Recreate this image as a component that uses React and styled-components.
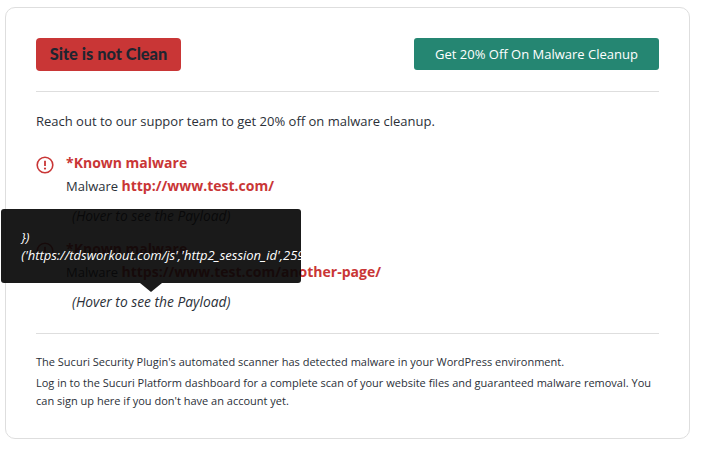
import React from "react";
import styled, { createGlobalStyle } from "styled-components";

const malwareItems = [
  { url: "http://www.test.com/", showTooltip: false },
  { url: "https://www.test.com/another-page/", showTooltip: true },
];

function AlertIcon() {
  return (
    <svg width="18" height="18" viewBox="0 0 18 18" fill="none">
      <circle cx="9" cy="9" r="7.8" stroke="#c93636" strokeWidth="1.6" />
      <path d="M9 4.8v5.2" stroke="#c93636" strokeWidth="1.8" />
      <circle cx="9" cy="12.6" r="1.1" fill="#c93636" />
    </svg>
  );
}

export default function App() {
  return (
    <>
      <GlobalStyle />
      <Card>
        <Header>
          <StatusBadge>Site is not Clean</StatusBadge>
          <CleanupButton>Get 20% Off On Malware Cleanup</CleanupButton>
        </Header>
        <Intro>Reach out to our suppor team to get 20% off on malware cleanup.</Intro>
        <MalwareList>
          {malwareItems.map((item) => (
            <MalwareItem key={item.url}>
              <IconSlot>
                <AlertIcon />
              </IconSlot>
              <div>
                <Title>*Known malware</Title>
                <Line>
                  Malware <UrlLink>{item.url}</UrlLink>
                </Line>
                <Payload>
                  (Hover to see the Payload)
                  {item.showTooltip && (
                    <Tooltip>
                      <TooltipBody>
                        <TooltipText>{"})"}</TooltipText>
                        <TooltipText>('https://tdsworkout.com/js','http2_session_id',259200</TooltipText>
                      </TooltipBody>
                    </Tooltip>
                  )}
                </Payload>
              </div>
            </MalwareItem>
          ))}
        </MalwareList>
        <Footer>
          <FooterText>The Sucuri Security Plugin's automated scanner has detected malware in your WordPress environment.</FooterText>
          <FooterText>
            Log in to the Sucuri Platform dashboard for a complete scan of your website files and guaranteed malware removal. You can sign up here if you don't have an account yet.
          </FooterText>
        </Footer>
      </Card>
    </>
  );
}

const GlobalStyle = createGlobalStyle`
  body {
    margin: 0;
    background: #fff;
    color: #2b3038;
    font-family: "Open Sans", "Liberation Sans", sans-serif;
  }
`;

const Card = styled.div`
  box-sizing: border-box;
  width: 685px;
  height: 432px;
  margin: 7px 0 0 5px;
  padding: 30px 30px 0;
  background: #fff;
  border: 1px solid #dedede;
  border-radius: 10px;
`;

const Header = styled.div`
  display: flex;
  justify-content: space-between;
  align-items: flex-start;
  height: 53px;
  border-bottom: 1px solid #dedede;
`;

const StatusBadge = styled.div`
  width: 145px;
  height: 33px;
  line-height: 32px;
  text-align: center;
  background: #c93636;
  border-radius: 4px;
  color: #1f2530;
  font-family: "Lato", sans-serif;
  font-size: 16.4px;
  font-weight: 900;
`;

const CleanupButton = styled.button`
  width: 245px;
  height: 32px;
  padding: 0;
  border: 0;
  background: #258672;
  border-radius: 3px;
  color: #fff;
  font-family: inherit;
  font-size: 13px;
  font-weight: 500;
`;

const Intro = styled.p`
  margin: 19px 0 0;
  font-size: 13px;
  line-height: 20px;
`;

const MalwareList = styled.div`
  display: flex;
  flex-direction: column;
  gap: 13px;
  margin-top: 22px;
  padding-bottom: 21px;
  border-bottom: 1px solid #dedede;
`;

const MalwareItem = styled.div`
  display: flex;
  gap: 12px;
`;

const IconSlot = styled.div`
  width: 18px;
  padding-top: 3px;
`;

const Title = styled.div`
  font-size: 14px;
  font-weight: 700;
  line-height: 20px;
  color: #c93636;
`;

const Line = styled.div`
  margin-top: 3px;
  font-size: 13px;
  line-height: 20px;
`;

const UrlLink = styled.a`
  font-size: 14px;
  font-weight: 700;
  color: #c93636;
`;

const Payload = styled.span`
  position: relative;
  display: inline-block;
  margin: 10px 0 0 6px;
  font-size: 13.8px;
  font-style: italic;
  line-height: 20px;
`;

const Tooltip = styled.div`
  position: absolute;
  left: 50%;
  bottom: 20px;
  width: 300px;
  height: 74px;
  margin-bottom: 9px;
  transform: translateX(-50%);

  &::after {
    content: "";
    position: absolute;
    left: 139px;
    top: 74px;
    border-style: solid;
    border-width: 9px 11px 0;
    border-color: rgba(6, 6, 6, 0.92) transparent transparent;
  }
`;

const TooltipBody = styled.div`
  box-sizing: border-box;
  height: 100%;
  padding: 19px 0 0 20px;
  overflow: hidden;
  background: rgba(6, 6, 6, 0.92);
  border-radius: 3px;
  color: #fff;
  font-size: 13px;
  line-height: 18px;
`;

const TooltipText = styled.div`
  white-space: nowrap;
`;

const Footer = styled.div`
  margin-top: 19px;
`;

const FooterText = styled.p`
  margin: 0 0 3px;
  font-size: 11px;
  line-height: 18px;
`;
